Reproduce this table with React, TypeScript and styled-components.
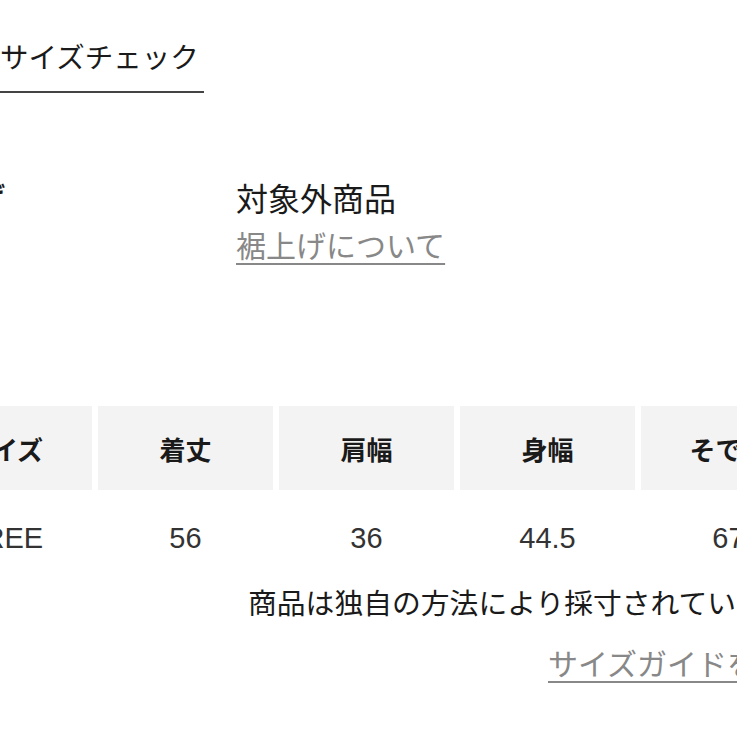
import React from "react";
import styled, { createGlobalStyle } from "styled-components";

const Global = createGlobalStyle`
  html, body { margin: 0; padding: 0; background: #fff; }
  body { overflow: hidden; }
`;

const JP = `"Helvetica Neue", "Liberation Sans", "Noto Sans CJK JP", sans-serif`;

const Viewport = styled.div`
  width: 737px;
  height: 737px;
  overflow: hidden;
  position: relative;
  font-family: ${JP};
  color: #1a1a1a;
`;

const Canvas = styled.div`
  margin-left: -83px;
  width: 901px;
  display: flex;
  flex-direction: column;
`;

const TabBar = styled.div`
  display: flex;
  padding-top: 35px;
  padding-left: 83px;
`;

const Tab = styled.div`
  font-family: "Noto Sans CJK JP", sans-serif;
  font-size: 28.5px;
  line-height: 42px;
  padding: 0 5px 14px 0;
  border-bottom: 2.5px solid #444;
  white-space: nowrap;
`;

const SpecRow = styled.div`
  display: grid;
  grid-template-columns: 309px 1fr;
  padding-left: 10px;
  margin-top: 80px;
`;

const SpecLabel = styled.div`
  font-family: "Noto Sans CJK JP", sans-serif;
  font-weight: 700;
  font-size: 26px;
  line-height: 42px;
  margin-top: 1px;
  white-space: nowrap;
`;

const SpecValue = styled.div`
  display: flex;
  flex-direction: column;
  align-items: flex-start;
`;

const ValueText = styled.div`
  font-family: "Noto Sans CJK JP", sans-serif;
  font-size: 32px;
  line-height: 48px;
`;

const GuideLink = styled.a<{ $size?: number }>`
  font-family: "Noto Sans CJK JP", sans-serif;
  font-size: ${(p) => p.$size ?? 30}px;
  line-height: 46px;
  color: #888;
  text-decoration: underline;
  text-decoration-thickness: 2px;
  text-underline-offset: 6px;
  white-space: nowrap;
`;

const Table = styled.div`
  margin-top: 139px;
  display: grid;
  grid-template-columns: repeat(5, 175px);
  column-gap: 6px;
`;

const HeadCell = styled.div`
  height: 84px;
  background: #f3f3f3;
  display: flex;
  align-items: center;
  justify-content: center;
  font-family: "Noto Sans CJK JP", sans-serif;
  font-weight: 700;
  font-size: 26px;
  color: #1a1a1a;
`;

const DataCell = styled.div`
  height: 96px;
  display: flex;
  align-items: center;
  justify-content: center;
  font-family: "Liberation Sans", "Noto Sans CJK JP", sans-serif;
  font-size: 29px;
  color: #333;
`;

const Notes = styled.div`
  display: flex;
  flex-direction: column;
  align-items: flex-start;
  padding-left: 331px;
`;

const NoteText = styled.div`
  font-family: "Noto Sans CJK JP", sans-serif;
  font-size: 28.8px;
  line-height: 44px;
  margin-top: -6px;
  white-space: nowrap;
`;

const NoteLinkWrap = styled.div`
  margin-top: 15px;
  padding-left: 300px;
`;

const heads = ["サイズ", "着丈", "肩幅", "身幅", "そで丈"];
const values = ["FREE", "56", "36", "44.5", "67"];

export default function App() {
  return (
    <Viewport>
      <Global />
      <Canvas>
        <TabBar>
          <Tab>サイズチェック</Tab>
        </TabBar>
        <SpecRow>
          <SpecLabel>裾上げ</SpecLabel>
          <SpecValue>
            <ValueText>対象外商品</ValueText>
            <GuideLink href="#">裾上げについて</GuideLink>
          </SpecValue>
        </SpecRow>
        <Table>
          {heads.map((h) => (
            <HeadCell key={h}>{h}</HeadCell>
          ))}
          {values.map((v, i) => (
            <DataCell key={i}>{v}</DataCell>
          ))}
        </Table>
        <Notes>
          <NoteText>商品は独自の方法により採寸されています。</NoteText>
          <NoteLinkWrap>
            <GuideLink href="#" $size={30}>サイズガイドを見る</GuideLink>
          </NoteLinkWrap>
        </Notes>
      </Canvas>
    </Viewport>
  );
}
